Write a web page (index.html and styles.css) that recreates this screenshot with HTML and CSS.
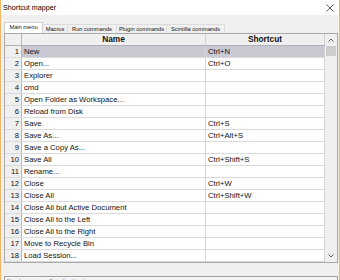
FILE: index.html
```html
<!DOCTYPE html>
<html lang="en">
<head>
    <meta charset="UTF-8">
    <meta name="viewport" content="width=device-width, initial-scale=1.0">
    <title>Shortcut mapper</title>
    <link rel="stylesheet" href="styles.css">
</head>
<body>
    <div class="window">
      <div class="titlebar">
        <span class="title">Shortcut mapper</span>
        <svg class="close" width="8" height="8" viewBox="0 0 8 8">
          <path d="M0.5 0.5 L7.5 7.5 M7.5 0.5 L0.5 7.5" stroke="#333" stroke-width="0.8" fill="none"/>
        </svg>
      </div>

      <div class="content">
        <div class="tabs">
          <div class="tab selected" style="width:39px">Main menu</div>
          <div class="tab" style="width:26px">Macros</div>
          <div class="tab" style="width:50px">Run commands</div>
          <div class="tab" style="width:51px">Plugin commands</div>
          <div class="tab" style="width:59px">Scintilla commands</div>
        </div>

        <div class="grid">
          <div class="table">
            <div class="row head">
              <div class="cell num"></div>
              <div class="cell name">Name</div>
              <div class="cell keys">Shortcut</div>
            </div>
            <div class="row selected"><div class="cell num">1</div><div class="cell name">New</div><div class="cell keys">Ctrl+N</div></div>
            <div class="row"><div class="cell num">2</div><div class="cell name">Open...</div><div class="cell keys">Ctrl+O</div></div>
            <div class="row"><div class="cell num">3</div><div class="cell name">Explorer</div><div class="cell keys"></div></div>
            <div class="row"><div class="cell num">4</div><div class="cell name">cmd</div><div class="cell keys"></div></div>
            <div class="row"><div class="cell num">5</div><div class="cell name">Open Folder as Workspace...</div><div class="cell keys"></div></div>
            <div class="row"><div class="cell num">6</div><div class="cell name">Reload from Disk</div><div class="cell keys"></div></div>
            <div class="row"><div class="cell num">7</div><div class="cell name">Save</div><div class="cell keys">Ctrl+S</div></div>
            <div class="row"><div class="cell num">8</div><div class="cell name">Save As...</div><div class="cell keys">Ctrl+Alt+S</div></div>
            <div class="row"><div class="cell num">9</div><div class="cell name">Save a Copy As...</div><div class="cell keys"></div></div>
            <div class="row"><div class="cell num">10</div><div class="cell name">Save All</div><div class="cell keys">Ctrl+Shift+S</div></div>
            <div class="row"><div class="cell num">11</div><div class="cell name">Rename...</div><div class="cell keys"></div></div>
            <div class="row"><div class="cell num">12</div><div class="cell name">Close</div><div class="cell keys">Ctrl+W</div></div>
            <div class="row"><div class="cell num">13</div><div class="cell name">Close All</div><div class="cell keys">Ctrl+Shift+W</div></div>
            <div class="row"><div class="cell num">14</div><div class="cell name">Close All but Active Document</div><div class="cell keys"></div></div>
            <div class="row"><div class="cell num">15</div><div class="cell name">Close All to the Left</div><div class="cell keys"></div></div>
            <div class="row"><div class="cell num">16</div><div class="cell name">Close All to the Right</div><div class="cell keys"></div></div>
            <div class="row"><div class="cell num">17</div><div class="cell name">Move to Recycle Bin</div><div class="cell keys"></div></div>
            <div class="row"><div class="cell num">18</div><div class="cell name">Load Session...</div><div class="cell keys"></div></div>
          </div>

          <div class="scrollbar">
            <div class="arrow">
              <svg width="6" height="4" viewBox="0 0 6 4"><path d="M0.5 3.5 L3 1 L5.5 3.5" stroke="#606060" stroke-width="1" fill="none"/></svg>
            </div>
            <div class="thumb"></div>
            <div class="track"></div>
            <div class="arrow">
              <svg width="6" height="4" viewBox="0 0 6 4"><path d="M0.5 0.5 L3 3 L5.5 0.5" stroke="#606060" stroke-width="1" fill="none"/></svg>
            </div>
          </div>
        </div>

        <div class="conflicts">No shortcut conflicts for this item.</div>
      </div>
    </div>
</body>
</html>
```

FILE: styles.css
```css
body {
  margin: 0;
  padding: 0;
  font-family: "Liberation Sans", Arial, sans-serif;
  color: #111;
}

.window {
  width: 340px;
  height: 280px;
  box-sizing: border-box;
  border-left: 1px solid #f2b766;
  border-right: 1px solid #f2b766;
  background: #f0f0f0;
  overflow: hidden;
}

.titlebar {
  height: 15px;
  background: #fff;
  display: flex;
  align-items: center;
  justify-content: space-between;
  padding: 0 5px 0 2px;
}

.title {
  font-size: 7.2px;
  color: #000;
}

.content {
  padding: 7px 1px 0 3px;
}

/* tab strip */
.tabs {
  display: flex;
  align-items: flex-end;
  height: 11px;
}

.tab {
  height: 9px;
  box-sizing: border-box;
  border: 1px solid #dcdcdc;
  border-bottom: none;
  margin-left: -1px;
  font-size: 5.7px;
  line-height: 8px;
  text-align: center;
  white-space: nowrap;
}

.tab.selected {
  height: 11px;
  margin-left: 0;
  background: #fff;
  border-color: #d0d0d0;
  line-height: 9px;
  position: relative;
  z-index: 1;
}

/* grid */
.grid {
  display: flex;
  width: 334px;
  height: 230px;
  box-sizing: border-box;
  border: 1px solid #a9a9a9;
  background: #fff;
}

.table {
  width: 320px;
}

.row {
  display: flex;
  height: 12px;
  box-sizing: border-box;
  border-bottom: 1px solid #dadada;
  font-size: 7.7px;
  line-height: 11px;
}

.cell {
  box-sizing: border-box;
  height: 11px;
  border-right: 1px solid #d4d4d4;
  padding: 0 2px;
  white-space: nowrap;
  overflow: hidden;
}

.num {
  width: 17px;
  text-align: right;
  padding: 0 2px 0 0;
  background: #f0f0f0;
  border-right-color: #b8b8b8;
}

.name {
  width: 184px;
}

.keys {
  width: 119px;
}

.head {
  border-bottom-color: #b0b0b0;
}

.head .cell {
  background: #f0f0f0;
  text-align: center;
  font-weight: bold;
  font-size: 8.3px;
}

.row.selected .name,
.row.selected .keys {
  background: #c9c9d4;
}

/* scrollbar */
.scrollbar {
  width: 12px;
  display: flex;
  flex-direction: column;
  background: #f0f0f0;
}

.arrow {
  height: 12px;
  display: flex;
  align-items: center;
  justify-content: center;
}

.thumb {
  height: 10px;
  margin: 0 1px;
  background: #cdcdcd;
}

.track {
  flex: 1;
}

.conflicts {
  margin-top: 13px;
  width: 334px;
  height: 20px;
  box-sizing: border-box;
  border: 1px solid #a0a0a0;
  background: #f4f4f4;
  font-size: 6px;
  color: #777;
  padding: 1px 2px;
}
```
